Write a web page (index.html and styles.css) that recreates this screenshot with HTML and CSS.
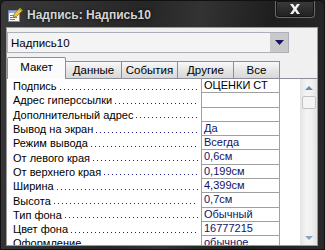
FILE: index.html
```html
<html>
    <head>
        <meta charset="utf-8">
        <link rel="stylesheet" href="styles.css">
    </head>
    <body>
        <div class="window">
            <div class="titlebar">
                <svg class="app-icon" width="16" height="16" viewBox="0 0 16 16">
                    <rect x="1.5" y="3.5" width="11" height="11" fill="#f4f6fa" stroke="#7a8aa0"/>
                    <rect x="2" y="4" width="10" height="2" fill="#8fb0d8"/>
                    <line x1="3" y1="8.5" x2="10" y2="8.5" stroke="#5a7fb5"/>
                    <line x1="3" y1="10.5" x2="10" y2="10.5" stroke="#5a7fb5"/>
                    <line x1="3" y1="12.5" x2="8" y2="12.5" stroke="#5a7fb5"/>
                    <path d="M7 7 L13 1 L15.5 3.5 L9.5 9.5 L6.5 10 Z" fill="#f0c040" stroke="#a07010" stroke-width="0.7"/>
                    <path d="M13 1 L15.5 3.5 L14.5 4.5 L12 2 Z" fill="#6ab04c"/>
                </svg>
                <span class="title">Надпись: Надпись10</span>
                <div class="close-btn">
                    <svg width="12" height="10" viewBox="0 0 12 10">
                        <path d="M1 0 H4 L6 3 L8 0 H11 L7.5 5 L11 10 H8 L6 7 L4 10 H1 L4.5 5 Z" fill="#f2f2f2"/>
                    </svg>
                </div>
            </div>
            <div class="content">
                <div class="combo">
                    <span class="combo-text">Надпись10</span>
                    <div class="combo-btn">
                        <svg width="9" height="5" viewBox="0 0 9 5"><path d="M0 0 H9 L4.5 5 Z" fill="#15156b"/></svg>
                    </div>
                </div>
                <div class="tabs">
                    <div class="tab active">Макет</div>
                    <div class="tab">Данные</div>
                    <div class="tab">События</div>
                    <div class="tab">Другие</div>
                    <div class="tab last">Все</div>
                </div>
                <div class="panel">
                    <div class="props">
                        <div class="row"><div class="label"><span>Подпись</span><i class="dots"></i></div><div class="value black">ОЦЕНКИ СТ</div></div>
                        <div class="row"><div class="label"><span>Адрес гиперссылки</span><i class="dots"></i></div><div class="value"></div></div>
                        <div class="row"><div class="label"><span>Дополнительный адрес</span><i class="dots"></i></div><div class="value"></div></div>
                        <div class="row"><div class="label"><span>Вывод на экран</span><i class="dots"></i></div><div class="value">Да</div></div>
                        <div class="row"><div class="label"><span>Режим вывода</span><i class="dots"></i></div><div class="value">Всегда</div></div>
                        <div class="row"><div class="label"><span>От левого края</span><i class="dots"></i></div><div class="value">0,6см</div></div>
                        <div class="row"><div class="label"><span>От верхнего края</span><i class="dots"></i></div><div class="value">0,199см</div></div>
                        <div class="row"><div class="label"><span>Ширина</span><i class="dots"></i></div><div class="value">4,399см</div></div>
                        <div class="row"><div class="label"><span>Высота</span><i class="dots"></i></div><div class="value">0,7см</div></div>
                        <div class="row"><div class="label"><span>Тип фона</span><i class="dots"></i></div><div class="value">Обычный</div></div>
                        <div class="row"><div class="label"><span>Цвет фона</span><i class="dots"></i></div><div class="value">16777215</div></div>
                        <div class="row"><div class="label"><span>Оформление</span><i class="dots"></i></div><div class="value">обычное</div></div>
                    </div>
                    <div class="scrollbar">
                        <div class="arrow up"></div>
                        <div class="thumb"></div>
                        <div class="track"></div>
                        <div class="arrow down"></div>
                    </div>
                </div>
            </div>
        </div>
    </body>
</html>
```

FILE: styles.css
```css
body {
    margin: 0;
    width: 325px;
    height: 250px;
    overflow: hidden;
    background: #1c1c1c;
    font-family: "Liberation Sans", Arial, sans-serif;
    font-size: 11px;
}

.window {
    height: 250px;
    box-sizing: border-box;
    display: flex;
    flex-direction: column;
    padding: 0 6px 3px 5px;
    background: linear-gradient(100deg, #3a3a3a 0%, #262626 40%, #333 55%, #1e1e1e 75%, #2a2a2a 100%);
    border: 1px solid #111;
    border-radius: 6px 6px 0 0;
}

.titlebar {
    height: 26px;
    flex: none;
    display: flex;
    align-items: center;
    position: relative;
}
.app-icon {
    margin-left: 1px;
    margin-top: 1px;
}
.title {
    margin-left: 4px;
    margin-top: 2px;
    color: #d4d4d4;
    font-size: 12px;
    font-weight: bold;
    text-shadow: 0 0 3px #000;
}
.close-btn {
    position: absolute;
    right: 3px;
    top: 0;
    width: 40px;
    height: 17px;
    box-sizing: border-box;
    border: 1px solid #6a6a6a;
    border-top: none;
    border-radius: 0 0 4px 4px;
    background: linear-gradient(#3c3c3c, #202020);
    box-shadow: inset 0 0 0 1px #141414;
    display: flex;
    align-items: center;
    justify-content: center;
}

.content {
    flex: 1;
    background: #f0f0f0;
    border: 1px solid #9a9a9a;
    display: flex;
    flex-direction: column;
    overflow: hidden;
}

.combo {
    margin: 4px 28px 0 0;
    height: 21px;
    box-sizing: border-box;
    border: 1px solid #abb0b8;
    background: #f4f4f4;
    display: flex;
    align-items: center;
}
.combo-text {
    flex: 1;
    padding-left: 3px;
    font-size: 11.5px;
    color: #000;
}
.combo-btn {
    width: 18px;
    height: 19px;
    background: #c9c9c9;
    display: flex;
    align-items: center;
    justify-content: center;
}

.tabs {
    margin-top: 4px;
    height: 21px;
    display: flex;
    align-items: flex-end;
}
.tab {
    width: 57px;
    height: 17px;
    box-sizing: border-box;
    border: 1px solid #8c8f98;
    border-bottom: none;
    margin-left: -1px;
    background: linear-gradient(#f8f8f8, #e6e6e6 50%, #d8d8d8);
    text-align: center;
    line-height: 17px;
    font-size: 11.5px;
    color: #000;
}
.tab.active {
    width: 59px;
    margin-left: 0;
    background: #fbfbfb;
    border-radius: 2px 2px 0 0;
    line-height: 19px;
    position: relative;
    z-index: 1;
    margin-bottom: -1px;
    height: 22px;
}
.tab.last {
    width: 47px;
}

.panel {
    flex: 1;
    display: flex;
    border-top: 1px solid #8c8f98;
    background: #fff;
    overflow: hidden;
}
.props {
    flex: 1;
}
.row {
    height: 14.3px;
    display: flex;
}
.label {
    width: 194px;
    display: flex;
    align-items: center;
    padding-left: 6px;
    box-sizing: border-box;
    color: #000;
    font-size: 11px;
    white-space: nowrap;
}
.dots {
    flex: 1;
    height: 7px;
    margin: 0 3px 0 3px;
    background: repeating-linear-gradient(to right, #22228a 0 1px, transparent 1px 4px) left bottom / 100% 1px no-repeat;
}
.value {
    width: 79px;
    box-sizing: border-box;
    border-left: 1px solid #a0a0a0;
    border-right: 1px solid #a0a0a0;
    border-bottom: 1px solid #a0a0a0;
    padding-left: 2px;
    font-size: 11px;
    line-height: 13px;
    color: #121268;
    white-space: nowrap;
    overflow: hidden;
}
.value.black {
    color: #000;
}

.scrollbar {
    width: 17px;
    display: flex;
    flex-direction: column;
    align-items: center;
    background: linear-gradient(to right, #e4e4e4, #f4f4f4 40%, #f0f0f0 70%, #e2e2e2);
}
.arrow {
    width: 0;
    height: 0;
    border-left: 4px solid transparent;
    border-right: 4px solid transparent;
    margin-top: 7px;
}
.arrow.up {
    border-bottom: 4px solid #6a8cae;
}
.arrow.down {
    border-top: 4px solid #8aa4c0;
    margin: 0 0 5px;
}
.thumb {
    width: 14px;
    height: 13px;
    margin-top: 6px;
    box-sizing: border-box;
    border: 1px solid #c2c2c2;
    border-radius: 2px;
    background: #f4f4f4;
}
.track {
    flex: 1;
}
```
